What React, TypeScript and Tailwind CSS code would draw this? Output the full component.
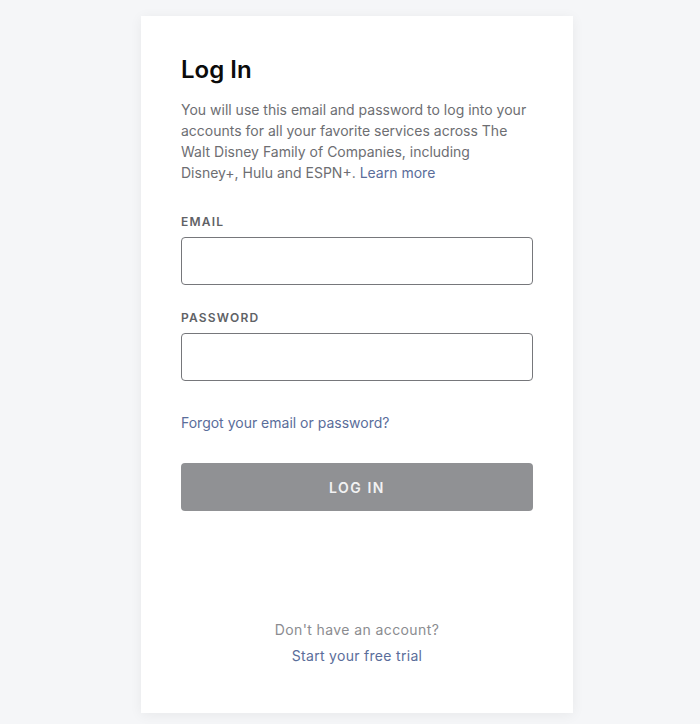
export default function App() {
  return (
    <div className="min-h-[724px] bg-[#f5f6f8] pt-4 pb-[11px] font-['Inter','Noto_Sans',sans-serif]">
      <div className="ml-[141px] w-[432px] bg-white px-10 pt-[38px] pb-[47px] shadow-[0_2px_12px_rgba(0,0,0,0.06)]">
        <h1 className="text-[24px] leading-8 font-semibold text-[#0b0b0b]">Log In</h1>
        <p className="mt-[13px] w-[348px] text-[14px] leading-[21px] text-[#6d6e72]">
          You will use this email and password to log into your accounts for all your favorite services across The
          Walt Disney Family of Companies, including Disney+, Hulu and ESPN+.{" "}
          <a href="#" className="text-[#5a6d9a]">
            Learn more
          </a>
        </p>

        <label htmlFor="email" className="mt-[31px] block text-[12px] leading-4 font-semibold tracking-[1.2px] text-[#5f6266]">
          EMAIL
        </label>
        <input
          id="email"
          type="email"
          className="mt-[7px] block h-[48px] w-full rounded-[4px] border border-[#76777b] bg-white px-3 text-[15px] outline-none"
        />

        <label htmlFor="password" className="mt-[25px] block text-[12px] leading-4 font-semibold tracking-[1.2px] text-[#5f6266]">
          PASSWORD
        </label>
        <input
          id="password"
          type="password"
          className="mt-[7px] block h-[48px] w-full rounded-[4px] border border-[#76777b] bg-white px-3 text-[15px] outline-none"
        />

        <a href="#" className="mt-[32px] block text-[14px] leading-5 text-[#5a6d9a]">
          Forgot your email or password?
        </a>

        <button
          type="button"
          className="mt-[30px] block h-[48px] w-full rounded-[4px] bg-[#909194] text-[14px] font-semibold tracking-[1.5px] text-[#f2f2f3]"
        >
          LOG IN
        </button>

        <div className="mt-[109px] flex flex-col items-center gap-[6px] text-[14px] leading-5">
          <span className="tracking-[0.4px] text-[#8b8c90]">Don't have an account?</span>
          <a href="#" className="tracking-[0.3px] text-[#5a6d9a]">
            Start your free trial
          </a>
        </div>
      </div>
    </div>
  );
}
